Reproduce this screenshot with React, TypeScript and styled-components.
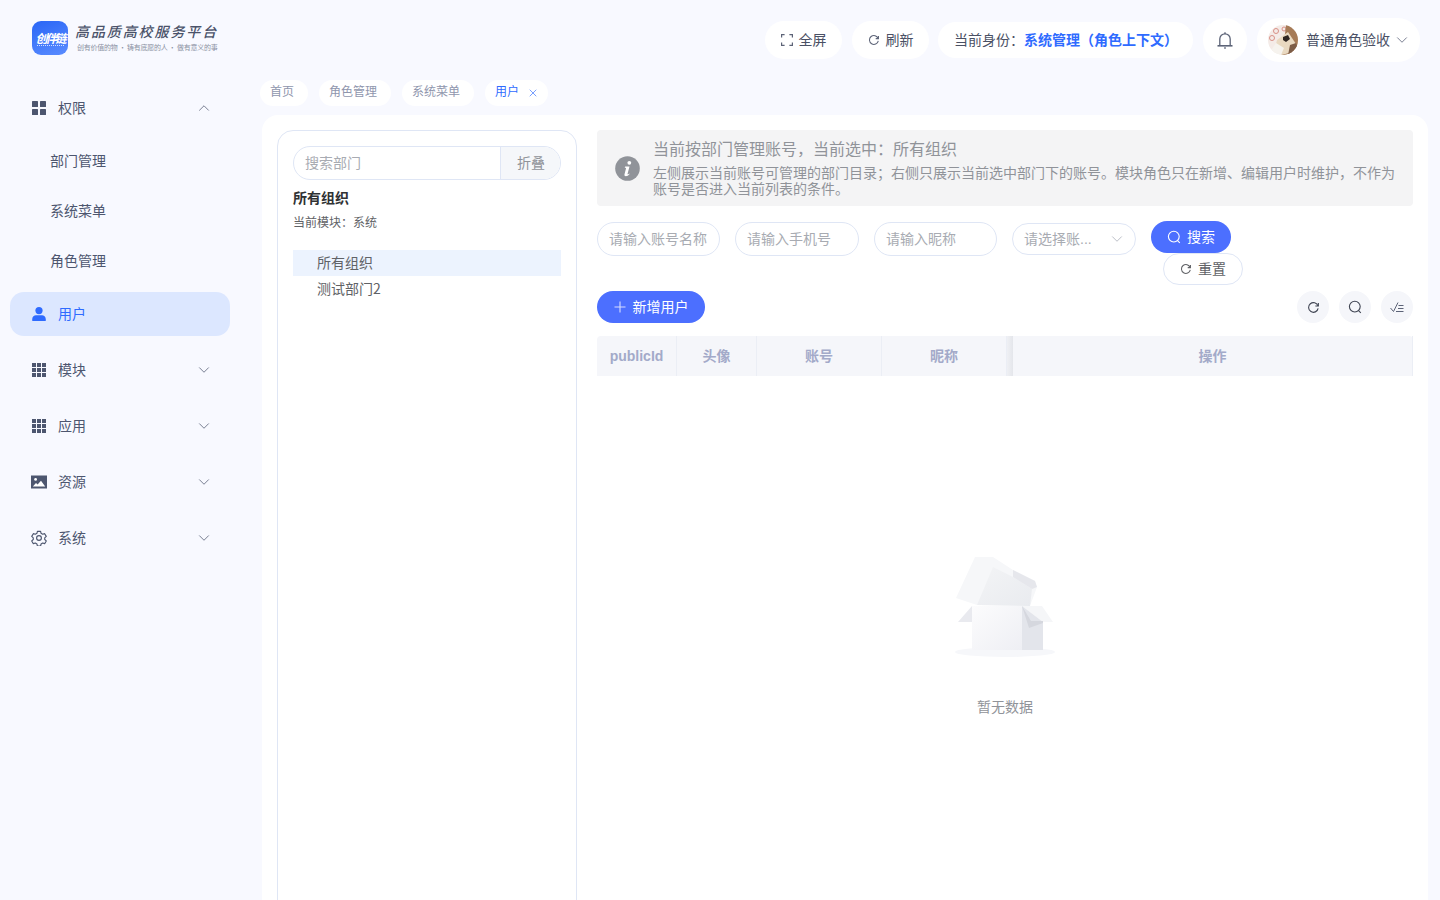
import React from 'react';
import styled, { createGlobalStyle } from 'styled-components';
import { ChevronDown, ChevronUp, X } from 'lucide-react';

const FONT = '"Noto Sans CJK SC", "Liberation Sans", sans-serif';

const GlobalStyle = createGlobalStyle`
  html, body {
    margin: 0;
    height: 100%;
    overflow: hidden;
    background: #f8f9ff;
    font-family: ${FONT};
  }
  * {
    box-sizing: border-box;
  }
`;

const GridTwoIcon = () => (
  <svg width="16" height="16" viewBox="0 0 16 16" fill="#4d566f">
    <rect x="1" y="1" width="6" height="6" rx="0.6" />
    <rect x="9" y="1" width="6" height="6" rx="0.6" />
    <rect x="1" y="9" width="6" height="6" rx="0.6" />
    <rect x="9" y="9" width="6" height="6" rx="0.6" />
  </svg>
);

const GridThreeIcon = () => (
  <svg width="16" height="16" viewBox="0 0 16 16" fill="#4d566f">
    {[1, 6, 11].map((y) =>
      [1, 6, 11].map((x) => <rect key={`${x}-${y}`} x={x} y={y} width="4" height="4" />)
    )}
  </svg>
);

const UserIcon = () => (
  <svg width="16" height="16" viewBox="0 0 16 16" fill="#2f6bff">
    <circle cx="8" cy="4.6" r="3.6" />
    <path d="M1.2 13.2c0-2.6 2-4 3.8-4h6c1.8 0 3.8 1.4 3.8 4v1.2c0 .4-.3.6-.6.6H1.8c-.3 0-.6-.2-.6-.6z" />
  </svg>
);

const PictureIcon = () => (
  <svg width="16" height="16" viewBox="0 0 16 16">
    <rect y="1.5" width="16" height="13" fill="#4d566f" />
    <circle cx="4.6" cy="5.4" r="1.4" fill="#fff" />
    <path d="M1.8 12.6 5 9l1.6 1.4L10 6.8l4.2 5.8z" fill="#fff" />
  </svg>
);

const GearIcon = () => (
  <svg width="16" height="16" viewBox="0 0 24 24" fill="none" stroke="#4d566f" strokeWidth="1.7" strokeLinejoin="round">
    <path d="M9.6 2h4.8l.7 3 2.4 1.4 3-.9 2.4 4.1-2.3 2.1v2.6l2.3 2.1-2.4 4.1-3-.9-2.4 1.4-.7 3H9.6l-.7-3-2.4-1.4-3 .9L1.100 16.400l2.300-2.100v-2.600L1.100 9.600 3.500 5.500l3 .9L8.900 5z" />
    <circle cx="12" cy="12" r="3.6" />
  </svg>
);

const FullscreenIcon = () => (
  <svg width="12" height="12" viewBox="0 0 12 12" fill="none" stroke="#5c6377" strokeWidth="1.2">
    <path d="M.6 3.600V.6h3M8.400 .6h3v3M11.400 8.400v3h-3M3.600 11.400h-3v-3" />
  </svg>
);

const RefreshIcon = ({ size = 12, color = '#5c6377' }: { size?: number; color?: string }) => (
  <svg width={size} height={size} viewBox="0 0 14 14" fill="none" stroke={color} strokeWidth="1.2">
    <path d="M11.800 5.200A5.200 5.200 0 1 0 12 8" />
    <path d="M12.200 2.200v3.200H9" />
  </svg>
);

const SearchIcon = ({ size = 14, color = '#fff' }: { size?: number; color?: string }) => (
  <svg width={size} height={size} viewBox="0 0 14 14" fill="none" stroke={color} strokeWidth="1.1">
    <circle cx="6.800" cy="6.600" r="5.400" />
    <path d="M10.600 10.600 12.800 12.800" />
  </svg>
);

const PlusIcon = () => (
  <svg width="12" height="12" viewBox="0 0 12 12" fill="none" stroke="#d5dcff" strokeWidth="1.1">
    <path d="M6 .5v11M.5 6h11" />
  </svg>
);

const BellIcon = () => (
  <svg width="18" height="18" viewBox="0 0 18 18" fill="none" stroke="#5c6377">
    <path d="M3.800 14.500V8a5.200 5.200 0 0 1 10.400 0v6.500" strokeWidth="1.3" />
    <path d="M1.500 14.800h15" strokeWidth="1.6" />
    <path d="M9 1.200v1.800M8.200 17h1.600" strokeWidth="1.3" />
  </svg>
);

const ChecklistIcon = () => (
  <svg width="16" height="16" viewBox="0 0 16 16" fill="none" stroke="#5c6377" strokeWidth="1">
    <path d="M1.500 9 4.500 12.500 9 3.500M9.500 6.500h5M9 9.500h5.500M7 12.500h7.500" />
  </svg>
);

const InfoIcon = () => (
  <svg width="25" height="25" viewBox="0 0 25 25">
    <circle cx="12.500" cy="12.500" r="12.300" fill="#909399" />
    <circle cx="14.300" cy="6.800" r="1.900" fill="#fff" />
    <path d="M10.200 10.600h4.300l-2 7.400c-.1.500.4.600 1.800-.5l.3.500c-1.300 1.500-2.500 2.200-3.700 2.200-1.200 0-1.700-.7-1.400-1.900l1.500-5.900c.1-.7-.5-.8-1.300-.7z" fill="#fff" />
  </svg>
);

const AvatarImage = () => (
  <svg width="30" height="30" viewBox="0 0 30 30">
    <defs>
      <clipPath id="avatarClip">
        <circle cx="15" cy="15" r="15" />
      </clipPath>
    </defs>
    <g clipPath="url(#avatarClip)">
      <rect width="30" height="30" fill="#f4ebe7" />
      <circle cx="8" cy="6" r="2.500" fill="none" stroke="#d88f86" strokeWidth="1" />
      <circle cx="16" cy="4" r="2" fill="none" stroke="#d88f86" strokeWidth="1" />
      <circle cx="4" cy="13" r="2.500" fill="none" stroke="#d88f86" strokeWidth="1" />
      <path d="M18 0h12v30H14l-3-8 4-6 2-7z" fill="#a67b57" />
      <path d="M9 15 20 7l4 6 4 6-4 8-10 3-7-7z" fill="#e9d9c1" />
      <path d="M0 30 8 18l8 5-3 7z" fill="#f6f3ee" />
      <path d="M15 12l5-2 2 4-4 3-3-2z" fill="#2f2622" />
      <path d="M22 20l6-2 2 6-5 6h-5z" fill="#7d5d47" />
    </g>
  </svg>
);

const EmptyBox = () => (
  <svg width="110" height="106" viewBox="0 0 110 106">
    <defs>
      <linearGradient id="boxFront" x1="0" y1="0" x2="1" y2="1">
        <stop offset="0" stopColor="#fcfcfd" />
        <stop offset="1" stopColor="#eeeff4" />
      </linearGradient>
      <linearGradient id="boxLid" x1="0" y1="0" x2="1" y2="1">
        <stop offset="0" stopColor="#f3f4f6" />
        <stop offset="1" stopColor="#e9ebef" />
      </linearGradient>
    </defs>
    <ellipse cx="55" cy="97" rx="50" ry="5" fill="#f6f7fa" />
    <path d="M22 51 8 67h14z" fill="#e9eaef" />
    <path d="M72 51h20l11 16H93z" fill="#f5f6f8" />
    <rect x="22" y="51" width="50" height="44" fill="url(#boxFront)" />
    <path d="M72 51 93 67v28H72z" fill="#e3e5eb" />
    <path d="M72 51 79 73 93 68v-2H81z" fill="#d5d7de" />
    <path d="M25 2h18l20 13 22 11 2 6-7 19-53-1-21-7z" fill="#f6f7f9" />
    <path d="M43 12 63 22l19 12-2 17-53-1z" fill="url(#boxLid)" />
    <path d="M63 15 85 26l2 6-5 2-19-12z" fill="#e6e7ec" />
  </svg>
);

const Page = styled.div`
  width: 1440px;
  height: 900px;
  overflow: hidden;
  display: flex;
  flex-direction: column;
  background: #f8f9ff;
`;

const Header = styled.header`
  height: 78px;
  flex: none;
  display: flex;
  align-items: center;
  justify-content: space-between;
  padding: 2px 20px 0 32px;
`;

const Brand = styled.div`
  display: flex;
  align-items: center;
  gap: 7px;
  height: 34px;
  margin-top: -4px;
`;

const LogoMark = styled.div`
  width: 36px;
  height: 34px;
  border-radius: 9px;
  background: linear-gradient(160deg, #2a66f6 0%, #5a8cff 100%);
  color: #fff;
  display: flex;
  flex-direction: column;
  align-items: center;
  justify-content: center;
  font-size: 12px;
  line-height: 13px;
  font-weight: 700;
  font-style: italic;
  letter-spacing: -2.4px;
`;

const LogoRule = styled.div`
  width: 27px;
  margin-top: 1px;
  border-top: 1px dotted rgba(255, 255, 255, 0.75);
`;

const BrandText = styled.div`
  display: flex;
  flex-direction: column;
  gap: 3px;
  margin-top: -1px;
`;

const BrandTitle = styled.div`
  font-size: 14px;
  line-height: 17px;
  font-weight: 500;
  font-style: italic;
  letter-spacing: 1.9px;
  color: #4a5269;
`;

const BrandSub = styled.div`
  font-size: 7px;
  line-height: 9px;
  color: #8b91a3;
  letter-spacing: -0.24px;
  padding-left: 2px;
`;

const HeaderActions = styled.div`
  display: flex;
  align-items: center;
  gap: 10px;
`;

const PillButton = styled.div`
  height: 38px;
  width: 77px;
  border-radius: 19px;
  background: #fff;
  display: flex;
  align-items: center;
  justify-content: center;
  gap: 6px;
  font-size: 14px;
  color: #4a5064;
`;

const RaisedText = styled.span`
  margin-bottom: 2px;
`;

const IdentityPill = styled.div`
  height: 36px;
  width: 255px;
  margin-left: -1px;
  border-radius: 18px;
  background: #fff;
  display: flex;
  align-items: center;
  padding-left: 16px;
  font-size: 14px;
  color: #4a5064;
  white-space: nowrap;
`;

const IdentityValue = styled.span`
  color: #2f6bff;
  font-weight: 700;
`;

const BellButton = styled.div`
  width: 44px;
  height: 44px;
  border-radius: 50%;
  background: #fff;
  display: flex;
  align-items: center;
  justify-content: center;
`;

const UserPill = styled.div`
  width: 163px;
  height: 44px;
  border-radius: 22px;
  background: #fff;
  display: flex;
  align-items: center;
  padding-left: 11px;
  gap: 8px;
  font-size: 14px;
  color: #4a5064;
  white-space: nowrap;
`;

const UserChevron = styled(ChevronDown)`
  margin-left: -5px;
`;

const Body = styled.div`
  flex: 1;
  display: flex;
  min-height: 0;
`;

const Sidebar = styled.nav`
  width: 260px;
  flex: none;
  padding: 8px 30px 0 10px;
  display: flex;
  flex-direction: column;
`;

const NavRow = styled.div<{ $active?: boolean }>`
  height: 44px;
  flex: none;
  margin-bottom: 12px;
  padding: 0 17px 0 21px;
  display: flex;
  align-items: center;
  gap: 11px;
  border-radius: 14px;
  font-size: 14px;
  color: ${(p) => (p.$active ? '#2f6bff' : '#4d566f')};
  background: ${(p) => (p.$active ? '#dce7ff' : 'transparent')};
`;

const NavOpenRow = styled(NavRow)`
  margin-bottom: 6px;
`;

const NavLabel = styled.span`
  flex: 1;
  margin-bottom: 2px;
`;

const SubMenu = styled.div`
  margin-bottom: 6px;
`;

const SubItem = styled.div`
  height: 50px;
  padding: 0 0 2px 40px;
  display: flex;
  align-items: center;
  font-size: 14px;
  color: #4d566f;
`;

const Main = styled.main`
  flex: 1;
  min-width: 0;
  display: flex;
  flex-direction: column;
  padding-right: 12px;
`;

const Tabs = styled.div`
  height: 37px;
  flex: none;
  padding-top: 2px;
  display: flex;
  gap: 11px;
`;

const Tab = styled.div<{ $active?: boolean; $w: number }>`
  width: ${(p) => p.$w}px;
  height: 26px;
  border-radius: 13px;
  background: #fff;
  display: flex;
  align-items: center;
  padding-left: 10px;
  gap: 8px;
  font-size: 12px;
  color: ${(p) => (p.$active ? '#2f6bff' : '#8f96ad')};
`;

const TabLabel = styled.span`
  margin-bottom: 5px;
`;

const Panel = styled.section`
  margin-left: 2px;
  height: 830px;
  flex: none;
  background: #fff;
  border-radius: 16px;
  padding: 15px;
  display: flex;
  gap: 20px;
`;

const DeptCard = styled.aside`
  width: 300px;
  flex: none;
  border: 1px solid #dfe6f5;
  border-radius: 16px;
  padding: 15px;
`;

const DeptSearch = styled.div`
  height: 34px;
  display: flex;
  border: 1px solid #dfe6f5;
  border-radius: 17px;
  overflow: hidden;
`;

const DeptInput = styled.div`
  flex: 1;
  padding: 0 0 2px 11px;
  display: flex;
  align-items: center;
  font-size: 14px;
  color: #a8abb2;
`;

const DeptAddon = styled.div`
  width: 60px;
  padding: 0 0 2px 1px;
  border-left: 1px solid #dfe6f5;
  background: #f5f7fa;
  display: flex;
  align-items: center;
  justify-content: center;
  font-size: 14px;
  color: #909399;
`;

const DeptTitle = styled.div`
  margin-top: 7px;
  font-size: 14px;
  line-height: 20px;
  font-weight: 700;
  color: #303133;
`;

const DeptModule = styled.div`
  margin-top: 6px;
  font-size: 12px;
  line-height: 18px;
  color: #606266;
`;

const DeptTree = styled.div`
  margin-top: 19px;
`;

const TreeRow = styled.div<{ $selected?: boolean }>`
  height: 26px;
  padding: 0 0 2px 24px;
  display: flex;
  align-items: center;
  font-size: 14px;
  color: #606266;
  background: ${(p) => (p.$selected ? '#ecf3fe' : 'transparent')};
`;

const Content = styled.div`
  flex: 1;
  min-width: 0;
  display: flex;
  flex-direction: column;
`;

const Alert = styled.div`
  height: 76px;
  flex: none;
  border-radius: 4px;
  background: #f4f4f5;
  padding: 0 16px 0 18px;
  display: flex;
  align-items: center;
  gap: 13px;
  color: #909399;
`;

const AlertText = styled.div`
  flex: 1;
  padding-bottom: 4px;
`;

const AlertTitle = styled.div`
  font-size: 16px;
  line-height: 24px;
`;

const AlertDesc = styled.div`
  margin-top: 4px;
  font-size: 14px;
  line-height: 16px;
`;

const Filters = styled.div`
  margin-top: 15px;
  height: 70px;
  flex: none;
  display: flex;
  align-items: flex-start;
`;

const FilterInput = styled.div<{ $w: number }>`
  width: ${(p) => p.$w}px;
  height: 34px;
  margin: 1px 15px 0 0;
  padding: 0 11px 2px;
  border: 1px solid #dfe6f5;
  border-radius: 17px;
  display: flex;
  align-items: center;
  justify-content: space-between;
  font-size: 14px;
  color: #a8abb2;
  white-space: nowrap;
`;

const FilterSelect = styled(FilterInput)`
  height: 32px;
  margin-top: 2px;
  padding-bottom: 0;
  padding-right: 9px;
`;

const SelectValue = styled.span`
  margin-bottom: 2px;
`;

const LatinDots = styled.span`
  font-family: "Liberation Sans", sans-serif;
`;

const FilterActions = styled.div`
  width: 92px;
  display: flex;
  flex-wrap: wrap;
`;

const PrimaryButton = styled.div<{ $w: number }>`
  width: ${(p) => p.$w}px;
  height: 32px;
  border-radius: 16px;
  background: #4c6fff;
  color: #fff;
  display: flex;
  align-items: center;
  justify-content: center;
  gap: 6px;
  font-size: 14px;
`;

const AddButton = styled(PrimaryButton)`
  gap: 7px;
`;

const ResetButton = styled.div`
  width: 80px;
  height: 32px;
  margin-left: 12px;
  border: 1px solid #dfe6f5;
  border-radius: 16px;
  background: #fff;
  color: #606266;
  display: flex;
  align-items: center;
  justify-content: center;
  gap: 6px;
  font-size: 14px;
`;

const Toolbar = styled.div`
  height: 32px;
  flex: none;
  display: flex;
  align-items: center;
  justify-content: space-between;
`;

const ToolGroup = styled.div`
  display: flex;
  gap: 10px;
`;

const ToolButton = styled.div`
  width: 32px;
  height: 32px;
  border-radius: 50%;
  background: #f5f6fa;
  display: flex;
  align-items: center;
  justify-content: center;
`;

const TableHead = styled.div`
  margin-top: 13px;
  height: 40px;
  flex: none;
  display: flex;
  background: #f5f6fa;
  border-radius: 4px 4px 0 0;
`;

const HeadCell = styled.div<{ $w?: number }>`
  ${(p) => (p.$w ? `width: ${p.$w}px; flex: none;` : 'flex: 1;')}
  padding-bottom: 2px;
  display: flex;
  align-items: center;
  justify-content: center;
  border-right: 1px solid #ebeef5;
  font-size: 14px;
  font-weight: 700;
  color: #a3aac9;
`;

const LatinHead = styled(HeadCell)`
  font-family: "Liberation Sans", sans-serif;
  padding-bottom: 0;
`;

const FixedEdge = styled.div`
  width: 6px;
  flex: none;
  background: linear-gradient(to right, #eff0f4, #e4e6eb);
`;

const Empty = styled.div`
  margin-top: 179px;
  display: flex;
  flex-direction: column;
  align-items: center;
`;

const EmptyText = styled.div`
  margin-top: 33px;
  font-size: 14px;
  line-height: 24px;
  color: #909399;
`;

const navBelow = [
  { label: '模块', icon: <GridThreeIcon /> },
  { label: '应用', icon: <GridThreeIcon /> },
  { label: '资源', icon: <PictureIcon /> },
  { label: '系统', icon: <GearIcon /> },
];

const App = () => {
  return (
    <Page>
      <GlobalStyle />
      <Header>
        <Brand>
          <LogoMark>
            创伴链
            <LogoRule />
          </LogoMark>
          <BrandText>
            <BrandTitle>高品质高校服务平台</BrandTitle>
            <BrandSub>创有价值的物 · 铸有底愿的人 · 做有意义的事</BrandSub>
          </BrandText>
        </Brand>
        <HeaderActions>
          <PillButton>
            <FullscreenIcon />
            <RaisedText>全屏</RaisedText>
          </PillButton>
          <PillButton>
            <RefreshIcon />
            <RaisedText>刷新</RaisedText>
          </PillButton>
          <IdentityPill>
            <RaisedText>
              当前身份：<IdentityValue>系统管理（角色上下文）</IdentityValue>
            </RaisedText>
          </IdentityPill>
          <BellButton>
            <BellIcon />
          </BellButton>
          <UserPill>
            <AvatarImage />
            <RaisedText>普通角色验收</RaisedText>
            <UserChevron size={18} color="#6b7287" strokeWidth={1.2} />
          </UserPill>
        </HeaderActions>
      </Header>
      <Body>
        <Sidebar>
          <NavOpenRow>
            <GridTwoIcon />
            <NavLabel>权限</NavLabel>
            <ChevronUp size={18} color="#6b7287" strokeWidth={1.2} />
          </NavOpenRow>
          <SubMenu>
            <SubItem>部门管理</SubItem>
            <SubItem>系统菜单</SubItem>
            <SubItem>角色管理</SubItem>
          </SubMenu>
          <NavRow $active>
            <UserIcon />
            <NavLabel>用户</NavLabel>
          </NavRow>
          {navBelow.map((item) => (
            <NavRow key={item.label}>
              {item.icon}
              <NavLabel>{item.label}</NavLabel>
              <ChevronDown size={18} color="#6b7287" strokeWidth={1.2} />
            </NavRow>
          ))}
        </Sidebar>
        <Main>
          <Tabs>
            <Tab $w={48}>
              <TabLabel>首页</TabLabel>
            </Tab>
            <Tab $w={72}>
              <TabLabel>角色管理</TabLabel>
            </Tab>
            <Tab $w={72}>
              <TabLabel>系统菜单</TabLabel>
            </Tab>
            <Tab $w={63} $active>
              <TabLabel>用户</TabLabel>
              <X size={12} strokeWidth={1.3} />
            </Tab>
          </Tabs>
          <Panel>
            <DeptCard>
              <DeptSearch>
                <DeptInput>搜索部门</DeptInput>
                <DeptAddon>折叠</DeptAddon>
              </DeptSearch>
              <DeptTitle>所有组织</DeptTitle>
              <DeptModule>当前模块：系统</DeptModule>
              <DeptTree>
                <TreeRow $selected>所有组织</TreeRow>
                <TreeRow>测试部门2</TreeRow>
              </DeptTree>
            </DeptCard>
            <Content>
              <Alert>
                <InfoIcon />
                <AlertText>
                  <AlertTitle>当前按部门管理账号，当前选中：所有组织</AlertTitle>
                  <AlertDesc>
                    左侧展示当前账号可管理的部门目录；右侧只展示当前选中部门下的账号。模块角色只在新增、编辑用户时维护，不作为账号是否进入当前列表的条件。
                  </AlertDesc>
                </AlertText>
              </Alert>
              <Filters>
                <FilterInput $w={123}>请输入账号名称</FilterInput>
                <FilterInput $w={124}>请输入手机号</FilterInput>
                <FilterInput $w={123}>请输入昵称</FilterInput>
                <FilterSelect $w={124}>
                  <SelectValue>
                    请选择账<LatinDots>...</LatinDots>
                  </SelectValue>
                  <ChevronDown size={18} color="#b4b8c2" strokeWidth={1.2} />
                </FilterSelect>
                <FilterActions>
                  <PrimaryButton $w={80}>
                    <SearchIcon />
                    <RaisedText>搜索</RaisedText>
                  </PrimaryButton>
                  <ResetButton>
                    <RefreshIcon color="#606266" />
                    <RaisedText>重置</RaisedText>
                  </ResetButton>
                </FilterActions>
              </Filters>
              <Toolbar>
                <AddButton $w={108}>
                  <PlusIcon />
                  <RaisedText>新增用户</RaisedText>
                </AddButton>
                <ToolGroup>
                  <ToolButton>
                    <RefreshIcon size={13} color="#3f4452" />
                  </ToolButton>
                  <ToolButton>
                    <SearchIcon color="#3f4452" />
                  </ToolButton>
                  <ToolButton>
                    <ChecklistIcon />
                  </ToolButton>
                </ToolGroup>
              </Toolbar>
              <TableHead>
                <LatinHead $w={80}>publicId</LatinHead>
                <HeadCell $w={80}>头像</HeadCell>
                <HeadCell $w={125}>账号</HeadCell>
                <HeadCell $w={125}>昵称</HeadCell>
                <FixedEdge />
                <HeadCell>操作</HeadCell>
              </TableHead>
              <Empty>
                <EmptyBox />
                <EmptyText>暂无数据</EmptyText>
              </Empty>
            </Content>
          </Panel>
        </Main>
      </Body>
    </Page>
  );
};

export default App;
